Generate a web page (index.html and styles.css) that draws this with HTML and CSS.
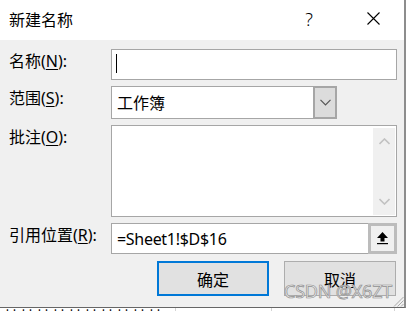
FILE: index.html
```html
<!DOCTYPE html>
<html lang="zh-CN">
<head>
<meta charset="utf-8">
<title>新建名称</title>
<link rel="stylesheet" href="styles.css">
</head>
<body>
<div class="screen">
  <div class="dialog">
    <div class="titlebar">
      <span class="title">新建名称</span>
      <span class="help">?</span>
      <span class="close">
        <svg width="13" height="13" viewBox="0 0 13 13"><path d="M0.5 0.5 L12.5 12.5 M12.5 0.5 L0.5 12.5" stroke="#000" stroke-width="1.1" fill="none"/></svg>
      </span>
    </div>
    <div class="body">
      <div class="form">
        <div class="lbl">名称(<u>N</u>):</div>
        <div class="field name"><span class="caret"></span></div>

        <div class="lbl">范围(<u>S</u>):</div>
        <div class="combo">
          <span class="combo-text">工作簿</span>
          <span class="combo-btn">
            <svg width="11" height="7" viewBox="0 0 11 7"><polyline points="0.5,0.8 5.5,5.8 10.5,0.8" stroke="#555" stroke-width="1.2" fill="none"/></svg>
          </span>
        </div>

        <div class="lbl">批注(<u>O</u>):</div>
        <div class="field memo">
          <div class="vscroll">
            <svg width="11" height="7" viewBox="0 0 11 7"><polyline points="0.5,6 5.5,1 10.5,6" stroke="#c2c2c2" stroke-width="1.6" fill="none"/></svg>
            <svg width="11" height="7" viewBox="0 0 11 7"><polyline points="0.5,1 5.5,6 10.5,1" stroke="#c2c2c2" stroke-width="1.6" fill="none"/></svg>
          </div>
        </div>

        <div class="lbl">引用位置(<u>R</u>):</div>
        <div class="field ref">
          <span class="ref-text">=Sheet1!$D$16</span>
          <span class="ref-btn">
            <svg width="11" height="13" viewBox="0 0 11 13"><polygon points="5.5,0 11,6 7.5,6 7.5,9.5 3.5,9.5 3.5,6 0,6" fill="#000"/><rect x="0" y="11" width="11" height="1.2" fill="#000"/></svg>
          </span>
        </div>
      </div>
      <div class="actions">
        <button class="btn ok">确定</button>
        <button class="btn">取消</button>
      </div>
      <div class="watermark">CSDN @X6ZT</div>
      <svg class="grip" width="11" height="11" viewBox="0 0 11 11"><path d="M10.5 1 L1 10.5 M10.5 4.5 L4.5 10.5 M10.5 8 L8 10.5" stroke="#a8a8a8" stroke-width="1" fill="none"/></svg>
    </div>
  </div>
  <div class="sheet">
    <div class="cell c1">某某某某某某某某某某</div>
    <div class="cell c2"></div>
    <div class="cell c3"></div>
  </div>
</div>
</body>
</html>
```

FILE: styles.css
```css
* { box-sizing: border-box; }
html, body {
  margin: 0;
  padding: 0;
  background: #ffffff;
  width: 407px;
  height: 311px;
  overflow: hidden;
}
body {
  font-family: "Noto Sans", "Noto Sans CJK SC", sans-serif;
  color: #000;
}
.screen {
  display: flex;
  flex-direction: column;
  width: 407px;
  height: 311px;
}
.dialog {
  width: 406px;
  height: 308px;
  border-right: 2px solid #8d8d8d;
  border-bottom: 1px solid #666;
  display: flex;
  flex-direction: column;
  background: #f0f0f0;
  flex: none;
}
.titlebar {
  height: 40px;
  background: #fff;
  display: flex;
  align-items: center;
  padding-left: 9px;
  flex: none;
}
.title {
  font-size: 16px;
  line-height: 22px;
  font-family: "Noto Sans CJK SC", sans-serif;
  margin-top: -2px;
}
.help {
  margin-left: auto;
  font-size: 18px;
  line-height: 22px;
  font-family: "Noto Sans", sans-serif;
  font-weight: 300;
  margin-top: -3px;
}
.close {
  display: flex;
  margin-left: 54px;
  margin-right: 24px;
  margin-top: -3px;
}
.body {
  position: relative;
  flex: 1;
  display: flex;
  flex-direction: column;
  padding-top: 9px;
}
.form {
  display: grid;
  grid-template-columns: 102px 286px;
  grid-template-rows: 31px 33px 92px 31px;
  row-gap: 6px;
  padding-left: 9px;
}
.lbl {
  font-size: 16px;
  line-height: 22px;
  padding-top: 1px;
  font-family: "Noto Sans", "Noto Sans CJK SC", sans-serif;
  white-space: nowrap;
}
.lbl u { text-underline-offset: 2px; text-decoration-thickness: 1px; }
.field {
  background: #fff;
  border: 1px solid #a6a6a6;
}
.name {
  display: flex;
  align-items: center;
  padding-left: 4px;
}
.caret {
  width: 1px;
  height: 19px;
  background: #000;
  margin-top: -2px;
}
.combo {
  width: 226px;
  display: flex;
  background: #fff;
  border: 1px solid #a6a6a6;
}
.combo-text {
  flex: 1;
  font-size: 16px;
  line-height: 22px;
  padding-left: 5px;
  padding-top: 4px;
  font-family: "Noto Sans CJK SC", sans-serif;
}
.combo-btn {
  width: 24px;
  margin: -1px -1px -1px 0;
  background: #dcdcdc;
  border: 2px solid #a6a6a6;
  display: flex;
  align-items: center;
  justify-content: center;
}
.memo {
  display: flex;
  justify-content: flex-end;
  padding: 2px 1px 1px 0;
  width: 286px;
}
.vscroll {
  width: 22px;
  background: #f0f0f0;
  display: flex;
  flex-direction: column;
  justify-content: space-between;
  align-items: center;
  padding: 10px 0 10px;
}
.ref {
  display: flex;
  align-items: center;
}
.ref-text {
  flex: 1;
  font-size: 16px;
  line-height: 22px;
  padding-left: 5px;
  font-family: "Noto Sans", sans-serif;
  letter-spacing: -0.3px;
}
.ref-btn {
  width: 29px;
  height: 31px;
  margin: -1px -1px -1px 0;
  border: 3px solid #bcbcbc;
  background: #f0f0f0;
  display: flex;
  align-items: center;
  justify-content: center;
}
.actions {
  display: flex;
  gap: 15px;
  margin-top: 7px;
  padding-left: 157px;
}
.btn {
  width: 112px;
  height: 35px;
  background: #e1e1e1;
  border: 1px solid #adadad;
  font-family: "Noto Sans CJK SC", sans-serif;
  font-size: 16px;
  color: #000;
  padding: 0;
  line-height: 22px;
}
.btn.ok {
  border: 2px solid #0078d7;
}
.watermark {
  position: absolute;
  left: 284px;
  top: 239px;
  font-family: "Noto Sans", sans-serif;
  font-size: 18px;
  line-height: 24px;
  color: #ececec;
  -webkit-text-stroke: 0.7px #8f8f8f;
  letter-spacing: -0.2px;
}
.grip {
  position: absolute;
  right: 0;
  bottom: 0;
}
.sheet {
  flex: 1;
  display: flex;
  overflow: hidden;
  background: #fff;
}
.cell {
  height: 3px;
  overflow: hidden;
  font-family: "Noto Sans CJK SC", sans-serif;
  font-size: 16px;
  line-height: 16px;
  border-right: 1px solid #d4d4d4;
  white-space: nowrap;
}
.c1 { width: 176px; padding-left: 3px; }
.c2 { width: 96px; }
.c3 { width: 123px; }
```
